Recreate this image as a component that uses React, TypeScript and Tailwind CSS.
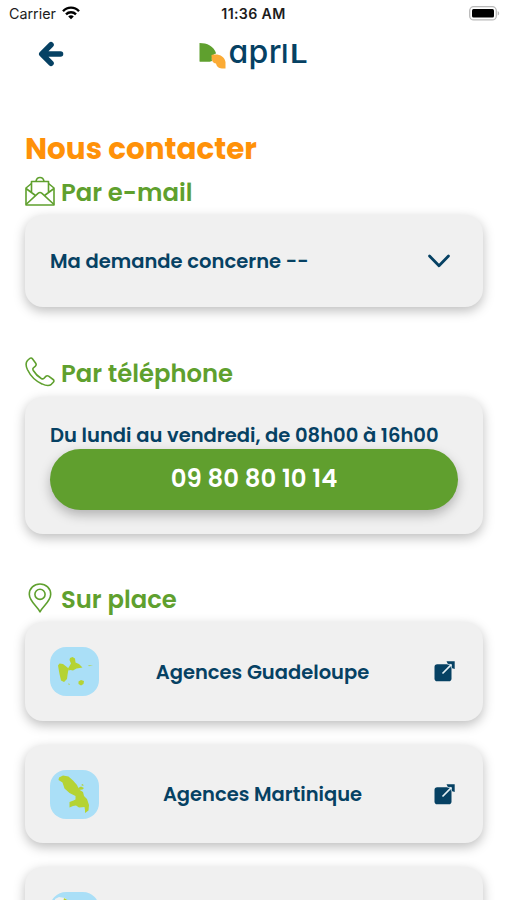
import type { ReactNode } from "react";

const AGENCIES = [
  { name: "Agences Guadeloupe", map: "guadeloupe" },
  { name: "Agences Martinique", map: "martinique" },
  { name: "", map: "guyane" }
];

const CARD = "rounded-[18px] bg-[#f0f0f0] shadow-[0_4px_12px_rgba(0,0,0,0.26)]";

function StatusBar() {
  return (
    <div className="grid h-[28px] grid-cols-3 items-center pl-[9px] pr-[7px] font-['Inter',sans-serif] text-[#1c1c1c]">
      <div className="flex items-center gap-[6px] text-[14.3px] leading-none">
        Carrier
        <svg className="-mt-[2px]" width="18" height="14" viewBox="0 0 18 14" fill="none" stroke="#000" strokeWidth="2.4">
          <path d="M1 5.2C5.4 .4 12.6 .4 17 5.2" />
          <path d="M4 8.3c2.8-2.8 7.2-2.8 10 0" />
          <path d="M6.2 10.4 9 13.2l2.8-2.8c-1.6-1.5-4-1.5-5.6 0Z" fill="#000" stroke="none" />
        </svg>
      </div>
      <div className="-ml-[2px] whitespace-nowrap text-center text-[14.2px] font-semibold leading-none tracking-[0.35px]">11:36 AM</div>
      <svg className="-mt-[2px] justify-self-end" width="31" height="15" viewBox="0 0 31 15">
        <rect x=".7" y=".7" width="26.6" height="13.2" rx="4" fill="#fff" stroke="#b9b9b9" strokeWidth="1.3" />
        <rect x="3" y="3" width="22" height="8.6" rx="1.5" fill="#000" />
        <path d="M28.7 5v4.6c2-.9 2-3.7 0-4.6Z" fill="#b9b9b9" />
      </svg>
    </div>
  );
}

function Header() {
  return (
    <div className="grid h-[52px] grid-cols-3 items-center">
      <svg className="ml-[38px]" width="26" height="26" viewBox="0 0 26 26" fill="none" stroke="#064163" strokeWidth="5.6" strokeLinecap="round" strokeLinejoin="round">
        <path d="M13 3.800 3.800 13l9.200 9.200M4.500 13h18" />
      </svg>
      <div className="flex h-[32px] items-center justify-center">
        <svg className="mt-[3px] shrink-0" width="28" height="28" viewBox="0 0 28 28">
          <path d="M.5 1C8 1 15 4 17.200 11.500c-3 .6-4.800 3-4.200 7.500-1.500.7-3 .8-4.500.8C3 19.800.5 19.800.5 19.500Z" fill="#5fa02e" />
          <path d="M12.500 13c7-1.500 13 1 14 7v6.500c-5 .5-8.500-.5-9.500-5-3.500-.5-4.500-3-4.500-8.500Z" fill="#fbab35" />
        </svg>
        <div className="ml-[2px] w-[80px] whitespace-nowrap pb-[3px] font-['Inter',sans-serif] text-[32px] font-medium leading-[28px] tracking-[0.3px] text-[#064163] [font-feature-settings:'cv11']">
          apr<span className="text-[25px] font-semibold tracking-[1.5px] uppercase">i</span>
          <span className="inline-block origin-left scale-x-[1.25] text-[25px] font-semibold uppercase">l</span>
        </div>
      </div>
    </div>
  );
}

function EnvelopeIcon() {
  return (
    <svg width="30" height="30" viewBox="0 0 30 30" fill="none" stroke="#5fa02e" strokeWidth="1.6" strokeLinejoin="round">
      <path d="M6.500 7.500 1 12v17h28V12l-5.500-4.500" />
      <path d="M6.500 17V5.500h17V17M11 5.200c1-5 7-5 8 0M1 12.500l9.500 7M29 12.500l-9.500 7M1 28.500 13 17.300c1.300-1 2.700-1 4 0l12 11.200" />
    </svg>
  );
}

function PhoneIcon() {
  return (
    <svg width="30" height="30" viewBox="0 0 30 30" fill="none" stroke="#5fa02e" strokeWidth="1.6" strokeLinejoin="round">
      <path d="M2.500 3.500 4.700 1.500c.9-.8 2-.7 2.700.2l3.300 4.500c.7 1 .6 2-.3 2.900L8.300 11c-.6.7-.5 1.600 0 2.500 2 3.400 4.500 5.900 8 8 .9.500 1.800.6 2.500 0l2-2.100c.8-.8 1.800-.9 2.800-.2l4.500 3.300c1 .7 1.100 1.800.2 2.700l-2 2.100c-1.800 1.700-5 1.700-9.300-.4C10.500 24 5.500 19 2.400 12.500.6 8.500.7 5.500 2.500 3.500Z" />
    </svg>
  );
}

function PinIcon() {
  return (
    <svg width="30" height="30" viewBox="0 0 30 30" fill="none" stroke="#5fa02e" strokeWidth="1.6">
      <path d="M15 28.800C12.200 23.500 4.300 18.200 4.300 11.300 4.300 5.200 9 1 15 1s10.700 4.200 10.700 10.300c0 6.900-7.900 12.200-10.700 17.500Z" strokeLinejoin="round" />
      <circle cx="15" cy="11.300" r="5.100" />
    </svg>
  );
}

function MapTile({ map }: { map: string }) {
  return (
    <svg className="mt-[1px] shrink-0" width="49" height="49" viewBox="0 0 49 49">
      <rect width="49" height="49" rx="16" fill="#aadff7" />
      {map === "guadeloupe" && (
        <g fill="#b5d334">
          <path d="M8 18.500 9.500 16.500 13 17l4.500 3.500 1 1.500-1 6-.5 4-3 3-3-1.500L9.500 27Z" />
          <path d="m18 21.500 3-5-1.500-3.500.5-2 2.500-1 2.500 1.500.5 4 3.500 1.500 3.500 3.500-6 1-3.500 2-2.500-.5-2 .5Z" />
          <path d="m28.500 34.500 2.500-1.500 3 1-.5 3-2.500 1.500-2.500-1.500ZM38 18.500l5-.6-4 1.300ZM18 36.500l2 .5-1 1Z" />
        </g>
      )}
      {map === "martinique" && (
        <g fill="#b5d334">
          <path d="m9 7.500 4-2 5.500 1L23 10.500l4 4.500 2 4.500 4 2.500 1 4 3 3 2 6-.5 5.500-3.500 2.500v-3l-.5-3-5.500.5-3-2-3 .5-3.500 1.500V32l4-1.500 2-1V26l-6-3-5-4.500-2-6L8.500 10Z" />
          <path d="m28 18 3-1.500 3 1.500-1.500 1.500-4 .5ZM31 15l2-1 .5 2Z" />
        </g>
      )}
      {map === "guyane" && (
        <>
          <path fill="#f0f0f0" d="M5 7 9 5l6 1 3 3-5 6H5Z" />
          <path fill="#b5d334" d="m14 6 5 3 6 8-4 20-9 3V17Z" />
        </>
      )}
    </svg>
  );
}

function ExternalIcon() {
  return (
    <svg className="mt-[1px]" width="21" height="21" viewBox="0 0 21 21">
      <rect x=".5" y="3.200" width="17" height="17" rx="2.800" fill="#064163" />
      <path d="M12.500 .3H20.700V8l-3.200-1V3.800L14 3.200Z" fill="#064163" />
      <path d="M13.500 3.400h3.800v3.800" fill="none" stroke="#c9e0eb" strokeWidth=".8" />
      <path d="m8.500 12.500 8.800-8.800" stroke="#e3eff4" strokeWidth="1.700" />
    </svg>
  );
}

function SectionTitle({ icon, children }: { icon: ReactNode; children: ReactNode }) {
  return (
    <h2 className="flex h-[32px] items-center gap-[6px] text-[24.3px] font-semibold leading-none text-[#5fa02e]">
      {icon}
      <span className="pt-[4px]">{children}</span>
    </h2>
  );
}

export default function App() {
  return (
    <div className="h-[900px] w-[507px] overflow-hidden bg-white">
      <StatusBar />
      <Header />

      <main className="px-[25px] pt-[53px] font-['Poppins','Inter',sans-serif] text-[#064163]">
        <h1 className="h-[42px] whitespace-nowrap text-[29.4px] font-bold leading-[31px] text-[#ff9108]">Nous contacter</h1>

        <SectionTitle icon={<EnvelopeIcon />}>Par e-mail</SectionTitle>
        <div className={`mt-[8px] flex h-[92px] w-[458px] items-center justify-between pl-[25px] pr-[32px] ${CARD}`}>
          <span className="pt-[2px] text-[19.55px] font-semibold">Ma demande concerne --</span>
          <svg width="24" height="14" viewBox="0 0 24 14" fill="none" stroke="#064163" strokeWidth="2.800" strokeLinecap="round" strokeLinejoin="round">
            <path d="m2.500 2 9.500 9.800L21.500 2" />
          </svg>
        </div>

        <div className="mt-[49px]">
          <SectionTitle icon={<PhoneIcon />}>Par téléphone</SectionTitle>
        </div>
        <div className={`mt-[9px] h-[137px] w-[458px] px-[25px] pt-[25px] ${CARD}`}>
          <p className="h-[26.500px] whitespace-nowrap text-[19.55px] font-semibold leading-[26px]">Du lundi au vendredi, de 08h00 à 16h00</p>
          <button className="flex h-[61px] w-[408px] items-center justify-center rounded-full bg-[#609f2e] pt-[1px] text-[24.4px] font-semibold text-white shadow-[0_5px_12px_rgba(0,0,0,0.26)]">
            09 80 80 10 14
          </button>
        </div>

        <div className="mt-[48px]">
          <SectionTitle icon={<PinIcon />}>Sur place</SectionTitle>
        </div>
        <div className="mt-[8px] flex flex-col gap-[24px]">
          {AGENCIES.map((agency) => (
            <div key={agency.map} className={`flex h-[98.500px] w-[458px] shrink-0 items-center pl-[25px] pr-[28px] ${CARD}`}>
              <MapTile map={agency.map} />
              <span className="flex-1 pr-[8px] pt-[2px] text-center text-[19.5px] font-semibold">{agency.name}</span>
              <ExternalIcon />
            </div>
          ))}
        </div>
      </main>
    </div>
  );
}
